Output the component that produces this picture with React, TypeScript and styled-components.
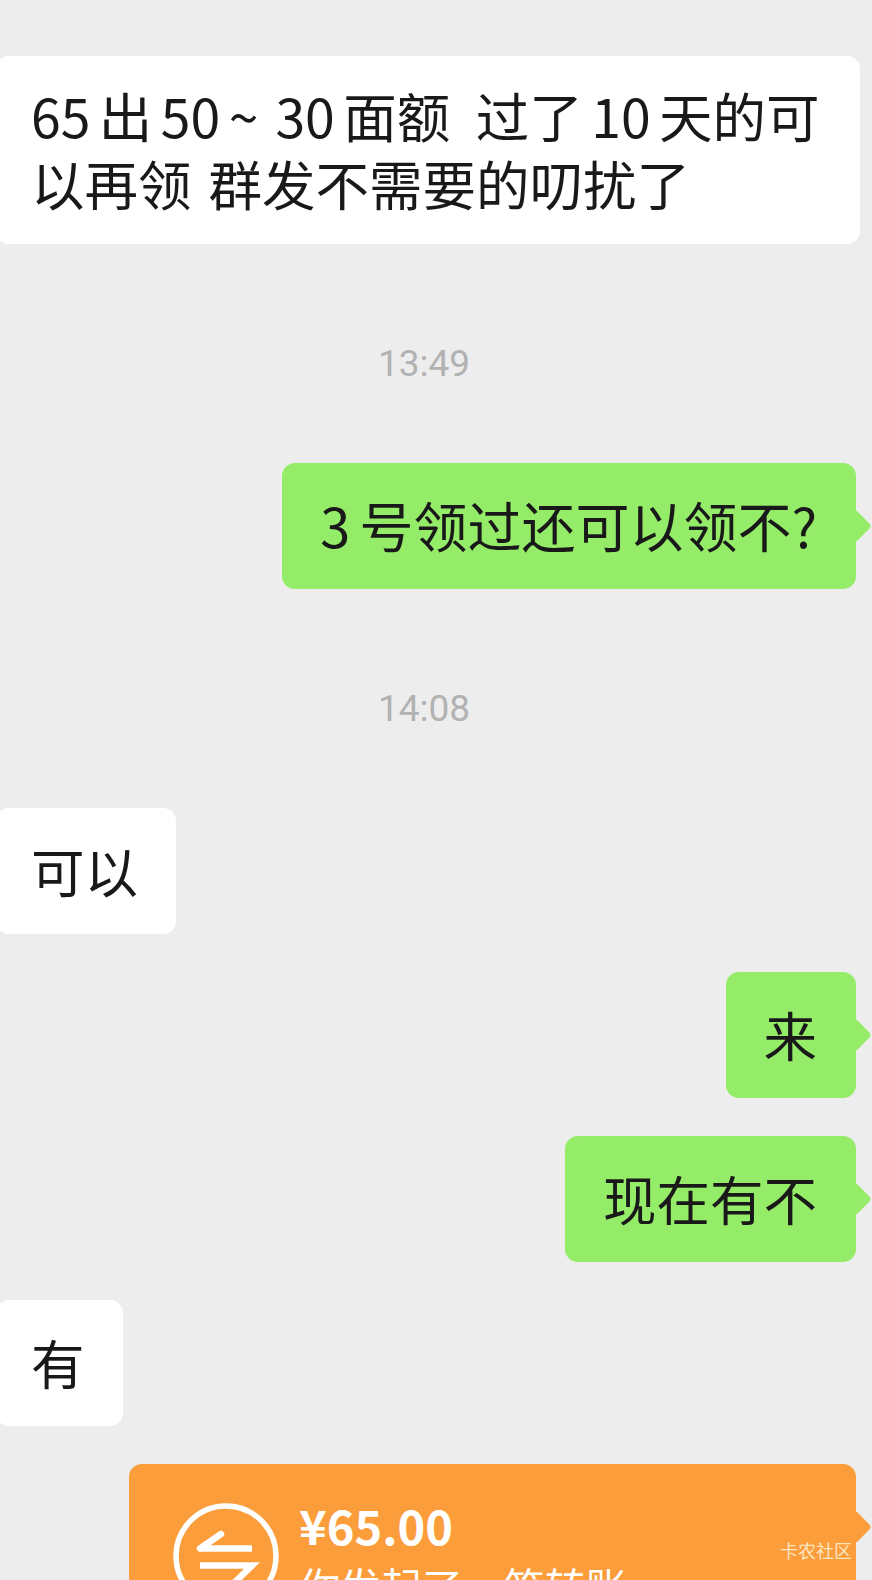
import { createGlobalStyle } from 'styled-components'
import styled from 'styled-components'

const GlobalStyle = createGlobalStyle`
  html, body {
    margin: 0;
    padding: 0;
    background: #ededed;
  }
`

const Page = styled.div`
  width: 872px;
  height: 1580px;
  overflow: hidden;
  position: relative;
  background: #ededed;
  font-family: 'Noto Sans CJK SC', sans-serif;
`

const Chat = styled.div`
  display: flex;
  flex-direction: column;
  gap: 38px;
  padding-top: 56px;
`

const Time = styled.div`
  margin: 59px 0 38px;
  padding-right: 24px;
  height: 46px;
  line-height: 46px;
  text-align: center;
  font-family: Roboto, sans-serif;
  font-size: 37px;
  color: #b2b2b2;
`

const Row = styled.div<{ $mine?: boolean }>`
  display: flex;
  justify-content: ${(props) => (props.$mine ? 'flex-end' : 'flex-start')};
  padding-right: ${(props) => (props.$mine ? '16px' : '0')};
`

const Bubble = styled.div<{ $mine?: boolean }>`
  position: relative;
  box-sizing: border-box;
  min-height: 126px;
  padding: 30px ${(props) => (props.$mine ? '39px' : '38px')} 32px ${(props) => (props.$mine ? '38px' : '35px')};
  margin-left: ${(props) => (props.$mine ? '0' : '-4px')};
  border-radius: 13px;
  background: ${(props) => (props.$mine ? '#95ec69' : '#ffffff')};
  color: #191919;
  font-size: 53.5px;
  line-height: 64px;
  word-spacing: -3px;
  white-space: pre-wrap;

  ${(props) =>
    props.$mine &&
    `
    &::after {
      content: '';
      position: absolute;
      top: 50%;
      right: -11px;
      width: 24px;
      height: 24px;
      margin-top: -12px;
      border-radius: 4px;
      background: #95ec69;
      transform: rotate(45deg);
    }
  `}
`

const WideBubble = styled(Bubble)`
  width: 864px;
  padding-right: 30px;
  padding-top: 25px;
  padding-bottom: 27px;
  line-height: 68px;
  word-spacing: -3.5px;
`

const QuestionBubble = styled(Bubble)`
  font-size: 54px;
`

const TransferCard = styled.div`
  position: relative;
  box-sizing: border-box;
  display: flex;
  align-items: flex-start;
  gap: 20px;
  width: 727px;
  height: 240px;
  padding: 39px 0 0 44px;
  border-radius: 13px;
  background: #fb9d3b;
  color: #fff;

  &::after {
    content: '';
    position: absolute;
    top: 51px;
    right: -11px;
    width: 24px;
    height: 24px;
    border-radius: 4px;
    background: #fb9d3b;
    transform: rotate(45deg);
  }
`

const TransferIcon = styled.svg`
  flex: none;
  width: 106px;
  height: 106px;
`

const TransferText = styled.div`
  display: flex;
  flex-direction: column;
`

const Amount = styled.div`
  margin-top: -6px;
  font-family: 'Noto Sans CJK SC', sans-serif;
  font-size: 47px;
  font-weight: 700;
  line-height: 56px;
`

const Note = styled.div`
  margin-top: 7px;
  font-size: 41px;
  line-height: 50px;
`

const Watermark = styled.div`
  position: absolute;
  right: 20px;
  bottom: 17px;
  font-size: 18px;
  line-height: 26px;
  color: #fde6c0;
`

function App() {
  return (
    <Page>
      <GlobalStyle />
      <Chat>
        <Row>
          <WideBubble>65 出 50 ~  30 面额   过了 10 天的可以再领  群发不需要的叨扰了</WideBubble>
        </Row>
        <Time>13:49</Time>
        <Row $mine>
          <QuestionBubble $mine>3 号领过还可以领不?</QuestionBubble>
        </Row>
        <Time>14:08</Time>
        <Row>
          <Bubble>可以</Bubble>
        </Row>
        <Row $mine>
          <Bubble $mine>来</Bubble>
        </Row>
        <Row $mine>
          <Bubble $mine>现在有不</Bubble>
        </Row>
        <Row>
          <Bubble>有</Bubble>
        </Row>
        <Row $mine>
          <TransferCard>
            <TransferIcon viewBox="0 0 106 106" fill="none" stroke="#fff" strokeWidth="5.5">
              <circle cx="53" cy="53" r="50" />
              <path d="M27 45.5H79" strokeWidth="6.5" />
              <path d="M27 45.5L48 31" strokeWidth="6.5" strokeLinecap="round" />
              <path d="M27 62.5H79L59 82" strokeWidth="6.5" />
            </TransferIcon>
            <TransferText>
              <Amount>¥65.00</Amount>
              <Note>你发起了一笔转账</Note>
            </TransferText>
          </TransferCard>
        </Row>
      </Chat>
      <Watermark>卡农社区</Watermark>
    </Page>
  )
}

export default App
